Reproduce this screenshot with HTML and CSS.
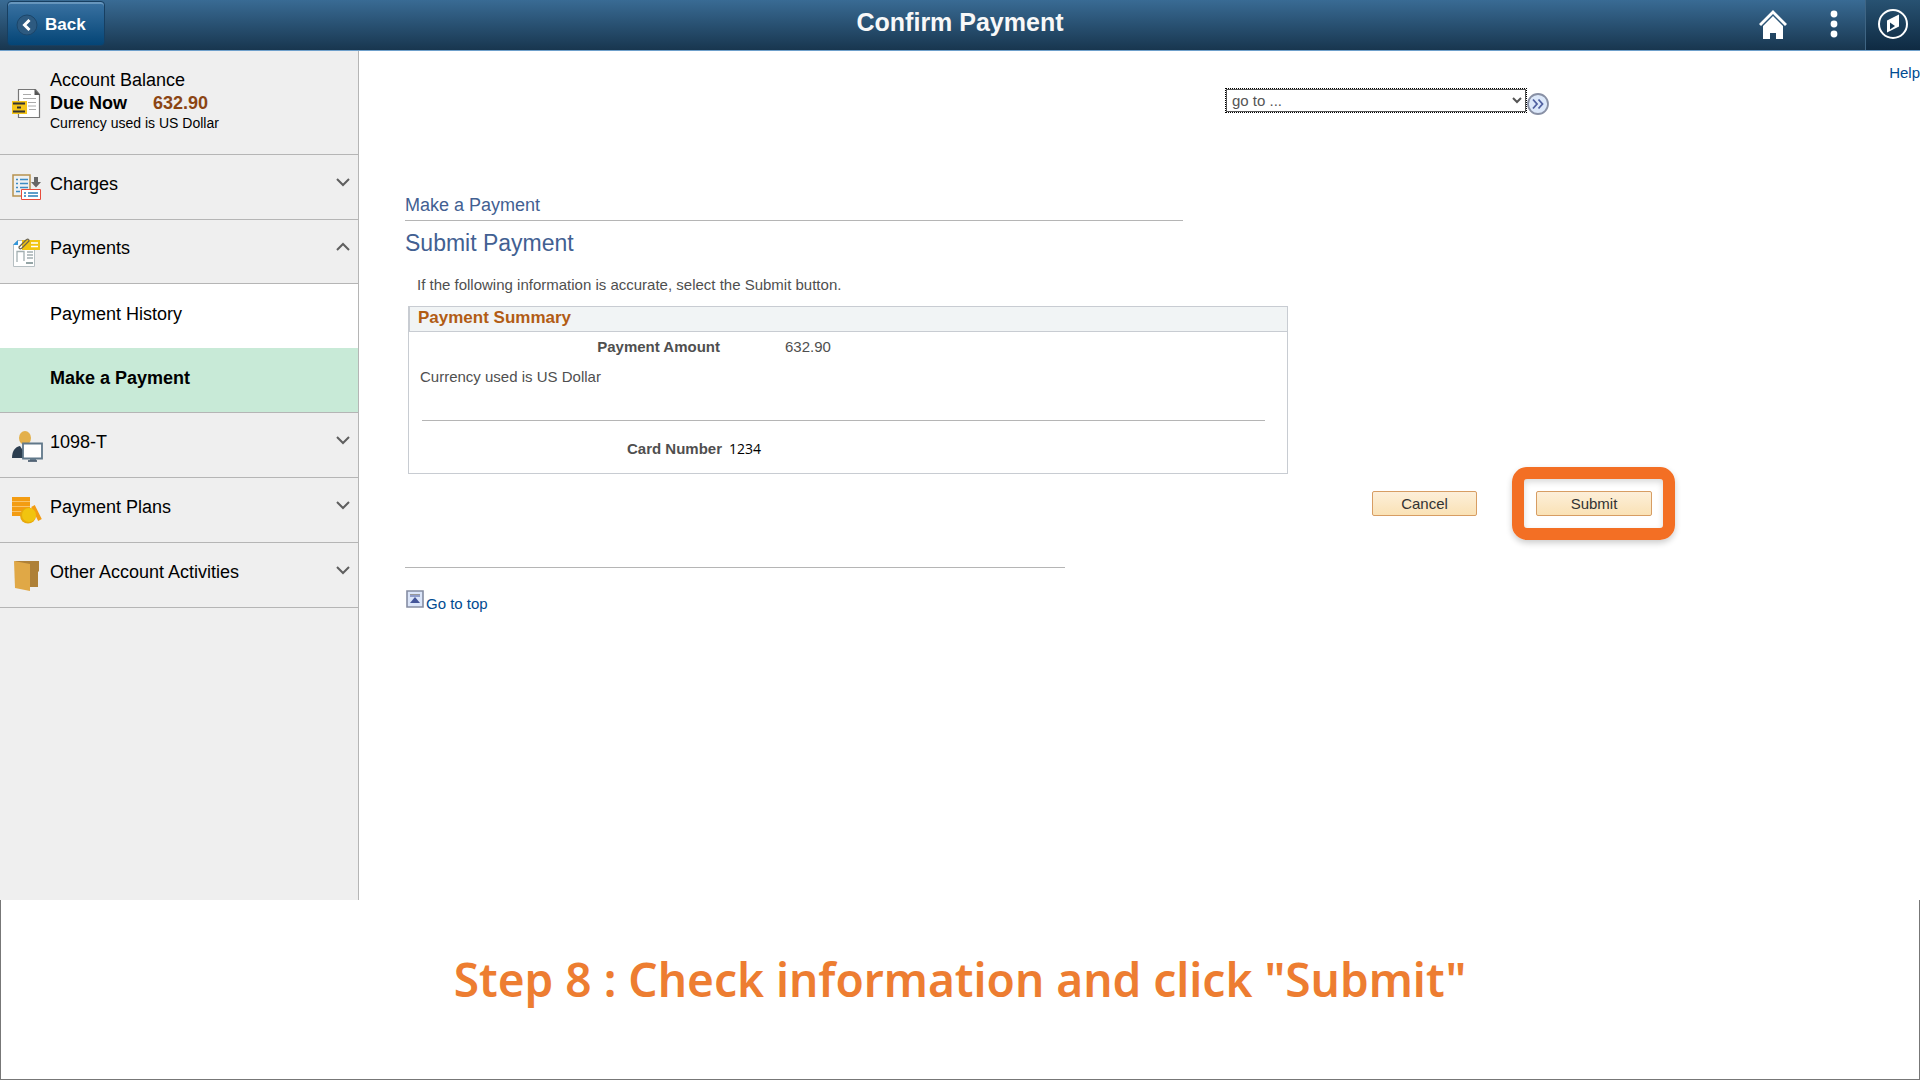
FILE: index.html
```html
<!DOCTYPE html>
<html lang="en">
<head>
    <meta charset="UTF-8">
    <meta name="viewport" content="width=device-width, initial-scale=1.0">
    <title>Confirm Payment</title>
    <link rel="stylesheet" href="styles.css">
</head>
<body>

    <header class="banner" id="top">
        <div class="banner-left">
            <button class="back-btn" type="button">
                <svg width="22" height="22" viewBox="0 0 22 22"><circle cx="11" cy="11" r="10" fill="#2d5a80" stroke="#1c466a"/><path d="M13.5 6l-5 5 5 5" fill="none" stroke="#fff" stroke-width="3"/></svg>
                Back
            </button>
        </div>
        <h1 class="banner-title">Confirm Payment</h1>
        <div class="banner-right">
            <button class="icon-btn" type="button" aria-label="Home">
                <svg width="30" height="30" viewBox="0 0 30 30" fill="#fff"><path d="M15 0L1 14l2 2L15 4l12 12 2-2z"/><path d="M15 6L5 16v13h7v-6h6v6h7V16z"/></svg>
            </button>
            <button class="icon-btn icon-more" type="button" aria-label="Actions">
                <svg width="8" height="30" viewBox="0 0 8 30" fill="#fff"><circle cx="4" cy="4" r="3.4"/><circle cx="4" cy="14" r="3.4"/><circle cx="4" cy="24" r="3.4"/></svg>
            </button>
            <button class="icon-btn icon-nav" type="button" aria-label="NavBar">
                <svg width="32" height="32" viewBox="0 0 32 32"><circle cx="16" cy="16" r="14" fill="none" stroke="#fff" stroke-width="2"/><path d="M22 6.500v12l-12 6V12.500z" fill="#fff"/><path d="M13 14.500v7l5-3.500z" fill="#173a57"/></svg>
            </button>
        </div>
    </header>

    <div class="page">
        <nav class="sidebar">
            <div class="balance">
                <svg class="menu-icon" width="32" height="32" viewBox="0 0 32 32"><path d="M7.500 2.500h17l4 5v23h-21z" fill="#fff" stroke="#777" stroke-width="1.200"/><path d="M23.500 2l5.500 6h-5.500z" fill="#555"/><path d="M12 7.500h8M12 11.500h13M17 15.500h8M17 19h8M18 22.500h7" stroke="#aaa"/><path d="M1 14h15v13H1z" fill="#f5c518"/><path d="M2 16.500h12M2 24.500h12" stroke="#333" stroke-width="2"/><path d="M6 20.500h4" stroke="#333" stroke-width="2"/></svg>
                <div class="balance-text">
                    <div class="balance-title">Account Balance</div>
                    <div class="balance-due"><b>Due Now</b><b class="amount">632.90</b></div>
                    <div class="balance-note">Currency used is US Dollar</div>
                </div>
            </div>

            <button class="menu-item" type="button">
                <svg class="menu-icon" width="32" height="32" viewBox="0 0 32 32"><path d="M2 3h17v21H2z" fill="#eef1f2" stroke="#b8924f" stroke-width="1.500"/><path d="M5 7.500h2M9 7.500h8M5 11.500h2M9 11.500h8M5 15.500h2M9 15.500h8M5 19.500h4" stroke="#3c8cc4" stroke-width="1.500"/><path d="M23 5h4v5h3l-5 5.500-5-5.500h3z" fill="#666"/><path d="M10.500 17.500h19v10h-19z" fill="#fff" stroke="#e74c3c"/><path d="M13 21h2M17 21h10M13 24h2M17 24h10" stroke="#2980b9" stroke-width="1.500"/></svg>
                <span class="menu-label">Charges</span>
                <svg class="chevron" width="14" height="9" viewBox="0 0 14 9"><path d="M1 1l6 6 6-6"/></svg>
            </button>
            <button class="menu-item open" type="button" aria-expanded="true">
                <svg class="menu-icon" width="32" height="32" viewBox="0 0 32 32"><path d="M6.500 3.500h17v26h-21v-22z" fill="#fff" stroke="#b6bfc2"/><path d="M2 8l5-5v5z" fill="#3498db"/><path d="M11 3h18v10H11z" fill="#f1c40f"/><path d="M20 6h7M20 9.500h7" stroke="#fff" stroke-width="1.500"/><path d="M9 9l6-6q3-2 3 1l-7 7q-3 2-3-1l6-6" fill="none" stroke="#6b6450" stroke-width="1.300"/><path d="M6 25V14.500h7V24M16 15h6M16 18h6M16 21h6" fill="none" stroke="#a3afb1" stroke-width="1.300"/><path d="M15 26h7" stroke="#95a5a6" stroke-width="2"/></svg>
                <span class="menu-label">Payments</span>
                <svg class="chevron" width="14" height="9" viewBox="0 0 14 9"><path d="M1 8l6-6 6 6"/></svg>
            </button>
            <div class="submenu">
                <a class="submenu-item" href="#">Payment History</a>
                <a class="submenu-item current" href="#">Make a Payment</a>
            </div>
            <button class="menu-item" type="button">
                <svg class="menu-icon" width="32" height="32" viewBox="0 0 32 32"><path d="M1 28c0-7 3-11 8-12l8 12z" fill="#2c3e50"/><ellipse cx="14" cy="8" rx="6" ry="7" fill="#e3b04b"/><path d="M12 13.500h19v15H12z" fill="#fff" stroke="#61788a" stroke-width="1.800"/><path d="M19 28.500h6v2h-6z" fill="#61788a"/><path d="M17 31h9" stroke="#34495e" stroke-width="1.500"/></svg>
                <span class="menu-label">1098-T</span>
                <svg class="chevron" width="14" height="9" viewBox="0 0 14 9"><path d="M1 1l6 6 6-6"/></svg>
            </button>
            <button class="menu-item" type="button">
                <svg class="menu-icon" width="32" height="32" viewBox="0 0 32 32"><path d="M1 4h18M1 9h18M1 14h18M1 19h12" stroke="#f39c12" stroke-width="4"/><path d="M1 6.500h18M1 11.500h18M1 16.500h14" stroke="#f9c46b"/><path d="M22 11l7 14" stroke="#f39c12" stroke-width="4"/><circle cx="17" cy="20.500" r="8" fill="#e8a90c"/><circle cx="18" cy="20" r="7" fill="#f1c40f"/></svg>
                <span class="menu-label">Payment Plans</span>
                <svg class="chevron" width="14" height="9" viewBox="0 0 14 9"><path d="M1 1l6 6 6-6"/></svg>
            </button>
            <button class="menu-item" type="button">
                <svg class="menu-icon" width="32" height="32" viewBox="0 0 32 32"><path d="M4 1h24v10l-1 1v15H16z" fill="#ae8037"/><path d="M3 1l16 3v27L4 28z" fill="#e0a846"/></svg>
                <span class="menu-label">Other Account Activities</span>
                <svg class="chevron" width="14" height="9" viewBox="0 0 14 9"><path d="M1 1l6 6 6-6"/></svg>
            </button>
        </nav>

        <main class="content">
            <div class="help-row"><a href="#">Help</a></div>

            <div class="goto-row">
                <select class="goto" aria-label="Go to">
                    <option>go to ...</option>
                </select>
                <button class="go-btn" type="button" aria-label="Go">
                    <svg width="22" height="22" viewBox="0 0 22 22"><circle cx="11" cy="11" r="10" fill="#dce8fa" stroke="#8890a5" stroke-width="1.800"/><path d="M6 6.500l4 4.500-4 4.500M11.500 6.500l4 4.500-4 4.500" fill="none" stroke="#5060a0" stroke-width="1.800"/></svg>
                </button>
            </div>

            <div class="crumb">Make a Payment</div>
            <h2>Submit Payment</h2>
            <p class="hint">If the following information is accurate, select the Submit button.</p>

            <section class="summary">
                <h3>Payment Summary</h3>
                <div class="field">
                    <span class="field-name">Payment Amount</span>
                    <span class="field-value">632.90</span>
                </div>
                <div class="currency">Currency used is US Dollar</div>
                <div class="card">
                    <span class="card-name">Card Number</span>
                    <span class="card-value">1234</span>
                </div>
            </section>

            <div class="actions">
                <button class="btn cancel" type="button">Cancel</button>
                <div class="highlight">
                    <button class="btn submit" type="submit">Submit</button>
                </div>
            </div>

            <div class="page-end">
                <a class="to-top" href="#top">
                    <svg width="18" height="18" viewBox="0 0 18 18"><path d="M1 1h16v16H1z" fill="#dce6fa" stroke="#858da3" stroke-width="1.600"/><path d="M4 4.500h10" stroke="#999" stroke-width="1"/><path d="M4 6h10" stroke="#445599" stroke-width="1"/><path d="M9 7l5 6H4z" fill="#445599"/></svg>
                    <span>Go to top</span>
                </a>
            </div>
        </main>
    </div>

    <footer class="caption">Step 8 : Check information and click "Submit"</footer>

</body>
</html>
```

FILE: styles.css
```css
* {
    box-sizing: border-box;
}

body {
    margin: 0;
    min-height: 100vh;
    display: flex;
    flex-direction: column;
    font-family: "Liberation Sans", Arial, sans-serif;
    font-size: 15px;
    color: #4f4f4f;
    background: #fff;
}

button {
    font-family: inherit;
    cursor: pointer;
}

svg {
    display: block;
    flex: none;
}

a {
    color: #004b91;
    text-decoration: none;
}

/* top bar */
.banner {
    display: flex;
    height: 51px;
    background: linear-gradient(#396b94, #18364f);
    border-bottom: 1px solid #6fa0cb;
}

.banner-left, .banner-right {
    flex: 1;
    display: flex;
}

.banner-right {
    justify-content: flex-end;
}

.back-btn {
    display: flex;
    align-items: center;
    gap: 7px;
    width: 98px;
    height: 45px;
    margin: 1px 0 0 7px;
    padding: 2px 8px 0;
    border: 1px solid #173f61;
    border-radius: 4px;
    background: linear-gradient(#3a72a2, #044576);
    box-shadow: inset 0 2px 0 #6796bd;
    color: #fff;
    font-size: 17px;
    font-weight: bold;
}

.banner-title {
    margin: 0;
    padding-top: 8px;
    color: #f8f8f8;
    font-size: 25px;
    line-height: 28px;
}

.icon-btn {
    display: flex;
    justify-content: center;
    padding: 10px 0 0;
    width: 60px;
    border: none;
    background: none;
}

.icon-more {
    width: 62px;
}

.icon-nav {
    width: 55px;
    padding-top: 8px;
    border-left: 1px solid #3f6584;
    background: linear-gradient(#285272, #0f2a42);
}

/* left menu */
.page {
    flex: 1;
    display: flex;
}

.sidebar {
    flex: none;
    width: 359px;
    background: #efefef;
    border-right: 1px solid #b5b5b5;
    color: #000;
    font-size: 18px;
}

.balance {
    display: flex;
    align-items: center;
    gap: 7px;
    height: 104px;
    padding-left: 11px;
    border-bottom: 1px solid #b5b5b5;
}

.balance-text {
    padding-bottom: 6px;
}

.balance-title, .balance-due {
    line-height: 23px;
}

.balance-note {
    font-size: 14px;
    line-height: 16px;
}

.amount {
    margin-left: 26px;
    color: #8b4513;
}

.menu-item {
    display: flex;
    align-items: center;
    gap: 7px;
    width: 100%;
    height: 65px;
    padding: 0 8px 0 11px;
    border: none;
    border-bottom: 1px solid #b5b5b5;
    background: none;
    color: #000;
    font-size: 18px;
    text-align: left;
}

.menu-item.open {
    height: 64px;
}

.menu-item .menu-icon {
    margin-top: 2px;
}

.menu-label {
    flex: 1;
    padding-bottom: 6px;
}

.chevron {
    margin-bottom: 10px;
    fill: none;
    stroke: #5f5f5f;
    stroke-width: 2;
}

.submenu {
    background: #fff;
    border-bottom: 1px solid #b5b5b5;
}

.submenu-item {
    display: block;
    height: 64px;
    padding: 18px 0 0 50px;
    color: #000;
    line-height: 24px;
}

.current {
    background: #c8ead7;
    font-weight: bold;
}

/* work area */
.content {
    flex: 1;
    padding: 12px 0 0 46px;
}

.help-row {
    text-align: right;
    line-height: 20px;
}

.goto-row {
    display: flex;
    width: 1144px;
    max-width: 100%;
    justify-content: flex-end;
    margin-top: 6px;
}

.goto {
    width: 300px;
    height: 23px;
    margin-right: 1px;
    padding: 0 1px;
    border: 1px solid #555;
    outline: 1px dotted #000;
    background: #fff;
    color: #555;
    font-family: inherit;
    font-size: 15px;
}

.go-btn {
    height: 26px;
    padding: 4px 0 0;
    border: none;
    background: none;
}

.crumb {
    max-width: 778px;
    margin-top: 78px;
    padding-bottom: 3px;
    border-bottom: 1px solid #b5b5b5;
    color: #426092;
    font-size: 18px;
    line-height: 24px;
}

h2 {
    margin: 8px 0 0;
    color: #426092;
    font-size: 23px;
    font-weight: normal;
    line-height: 28px;
}

.hint {
    margin: 18px 0 0 12px;
    line-height: 20px;
}

.summary {
    max-width: 880px;
    margin: 11px 0 0 3px;
    border: 1px solid #c8ccd2;
}

.summary h3 {
    margin: 0;
    padding: 0 8px;
    height: 25px;
    background: #f1f4f5;
    border-bottom: 1px solid #c8ccd2;
    border-left: 1px solid #c8ccd2;
    color: #b15c14;
    font-size: 17px;
    line-height: 21px;
}

.field {
    display: flex;
    padding-top: 5px;
    line-height: 20px;
}

.field-name {
    width: 311px;
    text-align: right;
    font-weight: bold;
}

.field-value {
    margin-left: 65px;
}

.currency {
    padding: 10px 11px 0;
    line-height: 20px;
}

.card {
    display: flex;
    margin: 33px 22px 0 13px;
    padding: 18px 0 14px;
    border-top: 1px solid #b5b5b5;
    line-height: 20px;
}

.card-name {
    width: 300px;
    text-align: right;
    font-weight: bold;
}

.card-value {
    margin-left: 7px;
    color: #000;
    font-family: "Open Sans", sans-serif;
    font-size: 14px;
}

.actions {
    display: flex;
    align-items: center;
    justify-content: flex-end;
    gap: 35px;
    width: 1270px;
    max-width: 100%;
    margin-top: -7px;
}

.btn {
    height: 25px;
    padding: 0;
    border: 1px solid #d79d63;
    border-radius: 2px;
    background: linear-gradient(#fdefd9, #fae2b6);
    color: #333;
    font-size: 15px;
}

.cancel {
    width: 105px;
}

.submit {
    width: 116px;
}

/* orange box round the Submit button */
.highlight {
    padding: 12px 11px 12px 12px;
    border: 12px solid #f36f24;
    border-radius: 15px;
    box-shadow: 0 3px 6px rgba(0, 0, 0, 0.2), inset 0 3px 6px rgba(0, 0, 0, 0.15);
}

.page-end {
    max-width: 660px;
    margin-top: 27px;
    padding: 22px 0 0 1px;
    border-top: 1px solid #b5b5b5;
}

.to-top {
    display: inline-flex;
    gap: 2px;
    line-height: 18px;
}

.to-top span {
    padding-top: 5px;
}

/* instruction under the screen */
.caption {
    padding: 47px 20px 68px;
    border: 1px solid #777;
    border-top: none;
    color: #ed7d31;
    font-family: "Noto Sans", "Open Sans", sans-serif;
    font-size: 46px;
    font-weight: 600;
    line-height: 64px;
    text-align: center;
}
```
